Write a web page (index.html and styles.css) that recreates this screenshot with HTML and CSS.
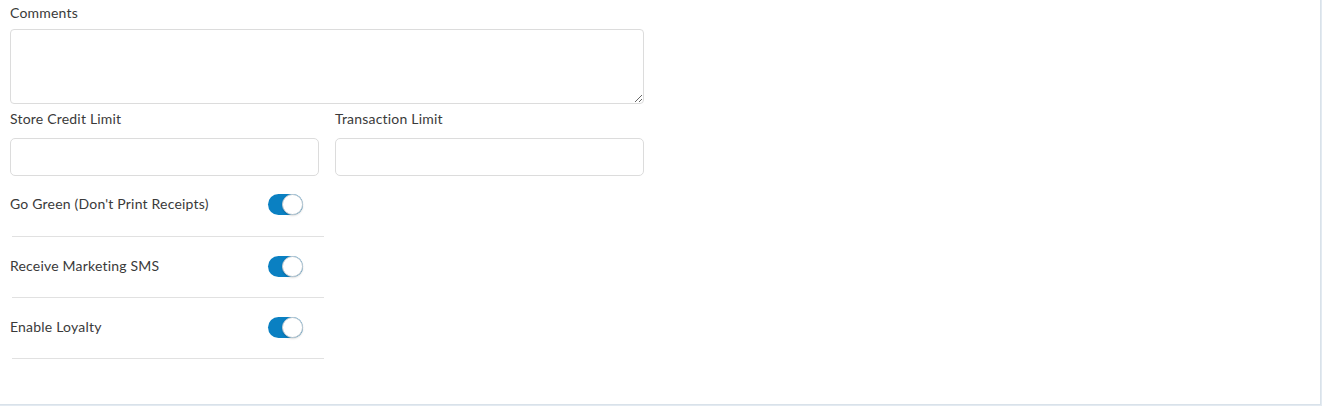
FILE: index.html
```html
<!DOCTYPE html>
<html>
<head>
<meta charset="utf-8">
<link rel="stylesheet" href="styles.css">
</head>
<body>
<div class="card">
  <div class="field">
    <label class="label">Comments</label>
    <textarea class="textarea"></textarea>
  </div>
  <div class="row2">
    <div class="field">
      <label class="label">Store Credit Limit</label>
      <input class="input" type="text">
    </div>
    <div class="field">
      <label class="label">Transaction Limit</label>
      <input class="input" type="text">
    </div>
  </div>
  <div class="toggles">
    <div class="toggle-row">
      <span class="toggle-label">Go Green (Don't Print Receipts)</span>
      <span class="switch"><span class="knob"></span></span>
    </div>
    <div class="toggle-row">
      <span class="toggle-label">Receive Marketing SMS</span>
      <span class="switch"><span class="knob"></span></span>
    </div>
    <div class="toggle-row">
      <span class="toggle-label">Enable Loyalty</span>
      <span class="switch"><span class="knob"></span></span>
    </div>
  </div>
</div>
</body>
</html>
```
FILE: styles.css
```css
html, body {
  margin: 0;
  padding: 0;
  background: #e3eaf1;
  font-family: Lato, "Liberation Sans", sans-serif;
  color: #3a3a3a;
}
.card {
  box-sizing: border-box;
  width: 1321px;
  height: 405px;
  background: #fff;
  border-right: 1px solid #d9e2ea;
  border-bottom: 1px solid #d9e2ea;
  padding: 4px 10px 0 10px;
}
.field {
  display: flex;
  flex-direction: column;
}
.label {
  font-size: 14px;
  letter-spacing: 0.2px;
  line-height: 18px;
  height: 18px;
  margin-bottom: 7px;
}
.textarea {
  box-sizing: border-box;
  width: 634px;
  height: 75px;
  border: 1px solid #dcdcdc;
  border-radius: 4px;
  resize: vertical;
  margin: 0;
  font-family: inherit;
}
.row2 {
  display: grid;
  grid-template-columns: 309px 309px;
  column-gap: 16px;
  margin-top: 6px;
}
.row2 .label {
  margin-bottom: 10px;
}
.input {
  box-sizing: border-box;
  height: 38px;
  width: 100%;
  border: 1px solid #dcdcdc;
  border-radius: 5px;
  margin: 0;
  font-family: inherit;
}
.toggles {
  width: 312px;
  margin-left: 2px;
}
.toggle-row {
  display: flex;
  align-items: center;
  justify-content: space-between;
  height: 58px;
  padding-bottom: 2px;
  border-bottom: 1px solid #e1e1e1;
}
.toggle-row:first-child {
  height: 57px;
  padding-bottom: 3px;
}
.toggle-label {
  font-size: 14px;
  letter-spacing: 0.2px;
  margin-left: -2px;
  margin-top: -2px;
}
.switch {
  position: relative;
  width: 35px;
  height: 21px;
  border-radius: 11px;
  background: #0a80c2;
  margin-right: 21px;
}
.knob {
  position: absolute;
  right: 0;
  top: 0;
  width: 21px;
  height: 21px;
  box-sizing: border-box;
  border-radius: 50%;
  background: #fff;
  border: 1px solid #c9ced3;
  box-shadow: 0 1px 2px rgba(0,0,0,0.15);
}
```
